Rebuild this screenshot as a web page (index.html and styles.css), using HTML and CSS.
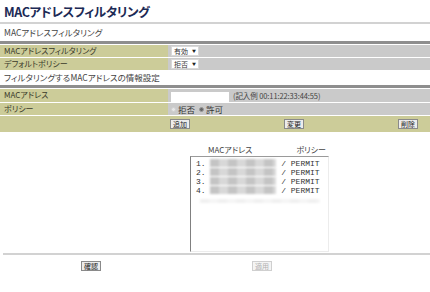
FILE: index.html
```html
<!DOCTYPE html>
<html lang="ja">
<head>
    <meta charset="UTF-8">
    <title>MACアドレスフィルタリング</title>
    <link rel="stylesheet" href="styles.css">
</head>
<body>
    <h1 class="page-title">MACアドレスフィルタリング</h1>
    <div class="rule"></div>

    <div class="caption">MACアドレスフィルタリング</div>
    <div class="bar"></div>
    <div class="form">
        <div class="row">
            <div class="key">MACアドレスフィルタリング</div>
            <div class="val"><span class="select">有効<i class="arrow">▼</i></span></div>
        </div>
        <div class="row">
            <div class="key">デフォルトポリシー</div>
            <div class="val"><span class="select">拒否<i class="arrow">▼</i></span></div>
        </div>
    </div>

    <div class="caption caption-tight">フィルタリングするMACアドレスの情報設定</div>
    <div class="bar"></div>
    <div class="form">
        <div class="row row-tall">
            <div class="key">MACアドレス</div>
            <div class="val"><span class="text-input"></span><span class="hint">(記入例 00:11:22:33:44:55)</span></div>
        </div>
        <div class="row">
            <div class="key">ポリシー</div>
            <div class="val">
                <span class="radio"></span><span class="radio-label">拒否</span>
                <span class="radio checked"></span><span class="radio-label">許可</span>
            </div>
        </div>
        <div class="row-actions">
            <span class="btn">追加</span>
            <span class="btn">変更</span>
            <span class="btn">削除</span>
        </div>
    </div>

    <div class="list-area">
        <div class="list-head">
            <span class="head-mac">MACアドレス</span>
            <span class="head-policy">ポリシー</span>
        </div>
        <div class="listbox">
            <div class="entry">1. <span class="masked"></span> / PERMIT</div>
            <div class="entry">2. <span class="masked"></span> / PERMIT</div>
            <div class="entry">3. <span class="masked"></span> / PERMIT</div>
            <div class="entry">4. <span class="masked"></span> / PERMIT</div>
            <div class="entry faint"><span class="masked"></span></div>
        </div>
    </div>
    <div class="rule rule-bottom"></div>

    <div class="footer">
        <span class="btn">確認</span>
        <span class="btn disabled">適用</span>
    </div>
</body>
</html>
```

FILE: styles.css
```css
* {
    margin: 0;
    padding: 0;
    box-sizing: border-box;
}

body {
    width: 430px;
    height: 292px;
    overflow: hidden;
    background: #fff;
    color: #333;
    font-family: "Noto Sans CJK JP", "Noto Sans", sans-serif;
    font-feature-settings: "palt";
    font-size: 8.5px;
}

.page-title {
    height: 21px;
    padding: 3px 0 0 4px;
    font-size: 12.5px;
    line-height: 18px;
    font-weight: bold;
    color: #1c2a55;
    letter-spacing: -0.4px;
}

.rule {
    height: 2px;
    margin-top: 1px;
    background: #d2d2d2;
}

.caption {
    height: 17px;
    padding-left: 4px;
    line-height: 17px;
    color: #444;
}

.caption-tight {
    height: 15px;
    line-height: 15px;
}

.bar {
    height: 3px;
    background: #8e8e8e;
    margin-bottom: 1px;
}

.form {
    display: flex;
    flex-direction: column;
    gap: 1px;
}

.row {
    display: grid;
    grid-template-columns: 168px 1fr;
    height: 12px;
}

.row-tall {
    height: 13px;
}

.key {
    background: #cccc99;
    padding-left: 4px;
    line-height: 12px;
    font-size: 8px;
    color: #3a3a2a;
    white-space: nowrap;
}

.val {
    background: #cacaca;
    display: flex;
    align-items: center;
    padding-left: 3px;
}

.select {
    display: inline-flex;
    align-items: center;
    height: 10px;
    padding: 0 2px;
    background: #fff;
    border: 1px solid #d8d8d8;
    font-size: 7px;
    line-height: 8px;
    color: #333;
}

.arrow {
    font-style: normal;
    font-size: 4px;
    margin-left: 4px;
    color: #222;
}

.text-input {
    display: inline-block;
    width: 58px;
    height: 10px;
    background: #fff;
    margin-top: 3px;
}

.hint {
    margin-left: 4px;
    font-size: 7.5px;
    letter-spacing: -0.1px;
    color: #444;
}

.radio {
    display: inline-block;
    width: 5px;
    height: 5px;
    border-radius: 50%;
    background: #e8e8e8;
    border: 1px solid #d0d0d0;
    margin-right: 2px;
}

.radio.checked {
    background: #666;
    border-color: #999;
    margin-left: 4px;
}

.row-actions {
    height: 16px;
    background: #cccc99;
    display: flex;
    align-items: center;
    justify-content: space-between;
    padding: 0 12px 0 170px;
}

.btn {
    display: inline-block;
    height: 10px;
    padding: 0 2px;
    background: #ececec;
    border: 1px solid #8a8a8a;
    font-size: 7px;
    line-height: 8px;
    color: #222;
}

.btn.disabled {
    color: #b0b0b0;
    border-color: #cfcfcf;
    background: #f4f4f4;
}

.list-area {
    padding-top: 13px;
    height: 121px;
}

.list-head {
    display: flex;
    height: 10px;
    line-height: 10px;
    font-size: 8px;
    color: #444;
}

.head-mac {
    margin-left: 208px;
}

.head-policy {
    margin-left: 44px;
}

.listbox {
    margin: 1px 0 0 190px;
    width: 139px;
    height: 96px;
    border-top: 1px solid #9a9a9a;
    border-left: 1px solid #808080;
    border-right: 1px solid #ececec;
    border-bottom: 1px solid #ececec;
    padding: 2px 0 0 5px;
    font-family: "Liberation Mono", "DejaVu Sans Mono", monospace;
    font-size: 8px;
    line-height: 9px;
    color: #333;
}

.entry {
    white-space: pre;
    height: 9px;
}

.masked {
    display: inline-block;
    width: 66px;
    height: 8px;
    vertical-align: -1px;
    background:
        repeating-linear-gradient(90deg, #c4c4c4 0 9px, #d8d8d8 9px 18px);
    filter: blur(1.2px);
}

.faint .masked {
    opacity: 0.25;
    margin-left: 4px;
    width: 120px;
    height: 4px;
}

.rule-bottom {
    margin: 0 0 0 3px;
}

.footer {
    display: flex;
    gap: 151px;
    padding: 6px 0 0 81px;
}
```
